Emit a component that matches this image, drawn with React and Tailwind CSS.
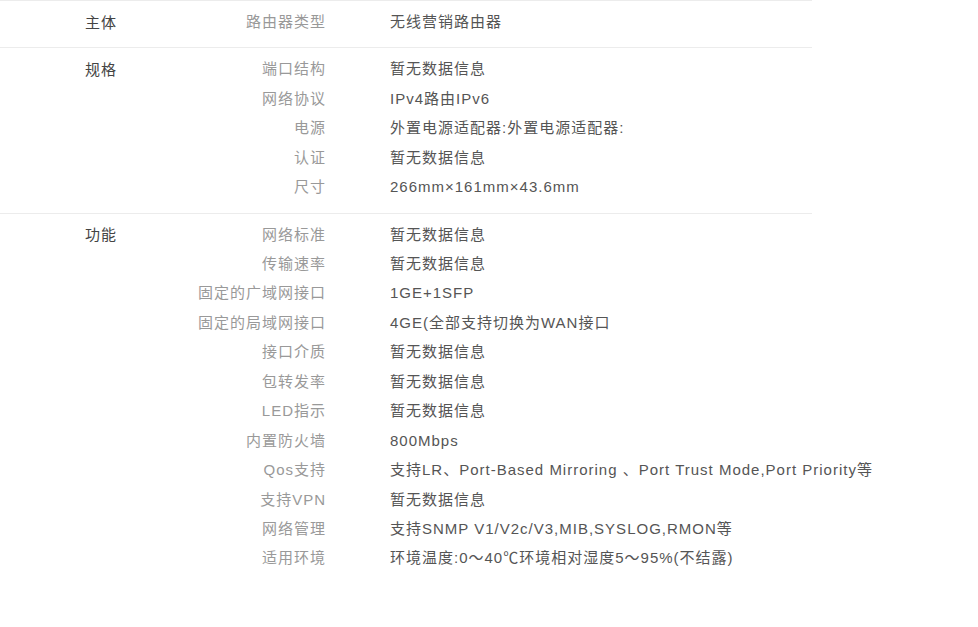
const sections = [
  { cat: "主体", rows: [["路由器类型", "无线营销路由器"]] },
  {
    cat: "规格",
    rows: [
      ["端口结构", "暂无数据信息"],
      ["网络协议", "IPv4路由IPv6"],
      ["电源", "外置电源适配器:外置电源适配器:"],
      ["认证", "暂无数据信息"],
      ["尺寸", "266mm×161mm×43.6mm"],
    ],
  },
  {
    cat: "功能",
    rows: [
      ["网络标准", "暂无数据信息"],
      ["传输速率", "暂无数据信息"],
      ["固定的广域网接口", "1GE+1SFP"],
      ["固定的局域网接口", "4GE(全部支持切换为WAN接口"],
      ["接口介质", "暂无数据信息"],
      ["包转发率", "暂无数据信息"],
      ["LED指示", "暂无数据信息"],
      ["内置防火墙", "800Mbps"],
      ["Qos支持", "支持LR、Port-Based Mirroring 、Port Trust Mode,Port Priority等"],
      ["支持VPN", "暂无数据信息"],
      ["网络管理", "支持SNMP V1/V2c/V3,MIB,SYSLOG,RMON等"],
      ["适用环境", "环境温度:0～40℃环境相对湿度5～95%(不结露)"],
    ],
  },
];

export default function App() {
  return (
    <div
      className="w-[978px] h-[627px] bg-white text-[15px] tracking-[1px] overflow-hidden"
      style={{ fontFamily: "'Liberation Sans', 'Noto Sans CJK SC', sans-serif" }}
    >
      <div className="w-[812px]">
        {sections.map((s) => (
          <div key={s.cat} className="flex border-t border-[#ececec] pl-[85px] pt-[6.5px] pb-[10.5px]">
            <div className="w-[80px] shrink-0 h-[29.45px] leading-[29.45px] text-[#444]">{s.cat}</div>
            <div className="flex flex-col shrink-0">
              {s.rows.map(([k, v]) => (
                <div key={k} className="flex h-[29.45px] items-center whitespace-nowrap">
                  <div className="w-[161px] shrink-0 text-right text-[#999]">{k}</div>
                  <div className="ml-[64px] shrink-0 text-[#555]">{v}</div>
                </div>
              ))}
            </div>
          </div>
        ))}
      </div>
    </div>
  );
}
